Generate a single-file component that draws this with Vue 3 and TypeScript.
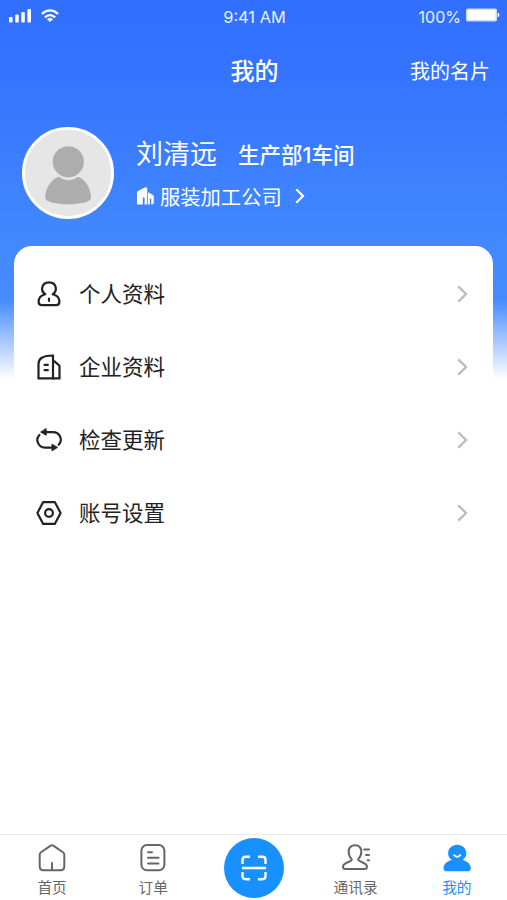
<script setup lang="ts">
interface MenuItem {
  key: 'person' | 'company' | 'refresh' | 'settings'
  label: string
}

interface TabItem {
  key: 'home' | 'order' | 'scan' | 'contacts' | 'mine'
  label: string
}

const menu: MenuItem[] = [
  { key: 'person', label: '个人资料' },
  { key: 'company', label: '企业资料' },
  { key: 'refresh', label: '检查更新' },
  { key: 'settings', label: '账号设置' },
]

const tabs: TabItem[] = [
  { key: 'home', label: '首页' },
  { key: 'order', label: '订单' },
  { key: 'scan', label: '' },
  { key: 'contacts', label: '通讯录' },
  { key: 'mine', label: '我的' },
]
</script>

<template>
  <div class="page">
    <div class="status">
      <div class="status-left">
        <svg class="signal" width="23" height="14" viewBox="0 0 23 14" fill="#fff">
          <rect x="0" y="8" width="3.6" height="5.6" rx="1" />
          <rect x="6.2" y="5.6" width="3.6" height="8" rx="1" />
          <rect x="12.2" y="3" width="3.6" height="10.6" rx="1" />
          <rect x="18.4" y="0" width="3.6" height="13.6" rx="1" />
        </svg>
        <svg class="wifi" width="18" height="14" viewBox="0 0 18 14" fill="none" stroke="#fff" stroke-width="2.3">
          <path d="M1 5C5.6 .2 12.4 .2 17 5" />
          <path d="M3.9 8.4C6.8 5.4 11.2 5.4 14.1 8.4" />
          <path d="M9 12.9L5.9 10.2C7.8 8.6 10.2 8.6 12.1 10.2Z" fill="#fff" stroke="none" />
        </svg>
      </div>
      <div class="clock">9:41 AM</div>
      <div class="status-right">
        <span>100%</span>
        <svg width="34" height="14" viewBox="0 0 34 14" fill="#fff">
          <rect x="0" y=".4" width="31" height="13" rx="1.6" fill-opacity=".75" />
          <rect x="1.5" y="1.8" width="28" height="10.2" rx=".8" />
          <path d="M31.6 4.5C34 5.2 34 8.6 31.6 9.3Z" />
        </svg>
      </div>
    </div>

    <header class="nav">
      <h1 class="title">我的</h1>
      <span class="nav-link">我的名片</span>
    </header>

    <section class="profile">
      <svg class="avatar" width="92" height="92" viewBox="0 0 92 92">
        <circle cx="46" cy="46" r="44.6" fill="#e6e6e6" stroke="#fff" stroke-width="2.8" />
        <circle cx="46.3" cy="34.8" r="15.6" fill="#adadad" />
        <path d="M36.8 49.8C43 54.4 50 54.4 56 49.8C63 52 69 61 69 71C69 79.3 23.2 79.3 23.2 71C23.2 61 29.5 52 36.8 49.8Z" fill="#adadad" />
      </svg>
      <div class="info">
        <div class="name-line">
          <span class="name">刘清远</span>
          <span class="dept">生产部1车间</span>
        </div>
        <div class="company">
          <svg class="building" width="17" height="18" viewBox="0 0 17 18" fill="#fff">
            <path d="M0 17.5V5.8Q0 4.6 1 4L7.8.5Q10.2-.2 10.2 2V17.5H7.6V10.5H5.8V17.5Z" />
            <path d="M11 5.2L15.2 7.4Q16.8 8.3 16.8 9.8V15.8Q16.8 17.5 15 17.5H14.2V11.5H12.8V17.5H11Z" />
          </svg>
          <span>服装加工公司</span>
          <svg class="company-arrow" width="10" height="16" viewBox="0 0 10 16" fill="none" stroke="#fff" stroke-width="2.2">
            <path d="M1.3 1.2L8 8L1.3 14.8" />
          </svg>
        </div>
      </div>
    </section>

    <main class="card">
      <div v-for="item in menu" :key="item.key" class="row">
        <svg class="row-icon" width="26" height="26" viewBox="0 0 26 26" fill="none" stroke="#222" stroke-width="2.2" stroke-linecap="round" stroke-linejoin="round">
          <template v-if="item.key === 'person'">
            <path d="M9.3 13.2C6.5 11.4 5.9 8.6 6.2 6.9C6.8 3.4 9.5 1.4 13 1.4S19.3 3.4 19.8 6.9C20.1 9.2 19.3 11.5 16.7 13.2C20.8 14.2 23.4 17 23.4 20.8C23.4 23.3 22.3 24.2 20 24.2H6C3.6 24.2 2.6 23.3 2.6 20.8C2.6 17 5.2 14.2 9.3 13.2Z" />
            <path d="M13 17.6V20" />
          </template>
          <template v-else-if="item.key === 'company'">
            <path d="M2.5 24.3V10C2.5 4.8 6.5 1.5 17 1.5V24.3Z" stroke-linejoin="miter" />
            <path d="M17 7.3H18.5L23.5 11.7V24.3H17" stroke-linejoin="miter" />
            <path d="M8.6 10.9H11.8M8.6 16.2H11.8" />
          </template>
          <template v-else-if="item.key === 'refresh'">
            <path d="M3.4 8C1.4 10 .9 13.2 1.9 15.6C3.1 18.6 5.6 20.6 9 20.6H17" />
            <path d="M9 5.2H16.5C20.3 5.2 23.3 7.2 24.4 10.4C25.3 13 24.7 15.7 22.7 17.8" />
            <path d="M10.2 2V8.2L5 5.2ZM16 17.6V23.8L21.2 20.6Z" fill="#222" stroke-width="1" />
          </template>
          <template v-else>
            <path d="M7.2 2.1H18.8L24.6 13L18.8 23.9H7.2L1.4 13Z" />
            <circle cx="13" cy="13" r="3.9" />
          </template>
        </svg>
        <span class="row-label">{{ item.label }}</span>
        <svg class="row-arrow" width="11" height="18" viewBox="0 0 11 18" fill="none" stroke="#bdbdbd" stroke-width="2.4">
          <path d="M1.3 1.4L9 9L1.3 16.6" />
        </svg>
      </div>
    </main>

    <nav class="tabbar">
      <div v-for="tab in tabs" :key="tab.key" class="tab" :class="{ active: tab.key === 'mine' }">
        <div v-if="tab.key === 'scan'" class="scan">
          <svg width="26" height="26" viewBox="0 0 26 26" fill="none" stroke="#fff" stroke-width="2.4">
            <path d="M1.5 9V5Q1.5 1.8 4.7 1.8H9M17 1.8H21.3Q24.5 1.8 24.5 5V9M24.5 17V21Q24.5 24.2 21.3 24.2H17M9 24.2H4.7Q1.5 24.2 1.5 21V17M1 13H25" />
          </svg>
        </div>
        <template v-else>
          <svg class="tab-icon" width="30" height="30" viewBox="0 0 30 30" fill="none" stroke="#666" stroke-width="2" stroke-linecap="round" stroke-linejoin="round">
            <template v-if="tab.key === 'home'">
              <path d="M13.7 2.6Q15 1.8 16.3 2.6L26 9.3Q27.3 10.2 27.3 11.8V23.5Q27.3 27.2 23.6 27.2H6.4Q2.7 27.2 2.7 23.5V11.8Q2.7 10.2 4 9.3Z" />
              <path d="M15 20V27" />
            </template>
            <template v-else-if="tab.key === 'order'">
              <rect x="3.4" y="2.1" width="23" height="25.2" rx="5.6" />
              <path d="M10 9.2H14M10 14.8H20.5M10 20.4H20.5" />
            </template>
            <template v-else-if="tab.key === 'contacts'">
              <path d="M10.8 16.4C8.2 13.8 7.7 11 7.7 8.8C7.7 4.7 10 2.2 14 2.2S20.3 4.7 20.3 8.8C20.3 11 19.7 13.8 17.1 16.4C16.8 19 25.8 19.2 26 23.5Q26 26 23.8 26H4.2Q2 26 2 23.5C2.4 19.2 11.1 19 10.8 16.4Z" />
              <path d="M23.2 6.6H28M25 12H28M26.6 17.2H28" />
            </template>
            <template v-else>
              <path d="M9.8 17C7.3 15.1 6.1 13 6.1 10.6C6.1 5.5 10 1.8 15.2 1.8S24.3 5.5 24.3 10.6C24.3 13 23.1 15.1 20.6 17C25.4 18.2 28.8 21.4 28.8 25.2Q28.8 28.3 25.7 28.3H4.6Q1.5 28.3 1.5 25.2C1.5 21.4 5 18.2 9.8 17Z" fill="#1890ff" stroke="none" />
              <path d="M12.1 12.2Q15.2 15.6 18.3 12.2" stroke="#fff" stroke-width="1.8" />
            </template>
          </svg>
          <span class="tab-label">{{ tab.label }}</span>
        </template>
      </div>
    </nav>
  </div>
</template>

<style>
body {
  margin: 0;
  background: #fff;
}
</style>

<style scoped>
.page {
  width: 507px;
  height: 900px;
  display: flex;
  flex-direction: column;
  overflow: hidden;
  color: #fff;
  font-family: "Noto Sans CJK SC", sans-serif;
  background: linear-gradient(180deg, #306eff 0, #3776ff 100px, #4086ff 220px, #468cff 300px, #fff 379px);
}

.status {
  height: 32px;
  display: grid;
  grid-template-columns: 1fr auto 1fr;
  align-items: center;
  padding: 0 7px 0 9px;
  box-sizing: border-box;
  font: 400 16px/32px Inter, sans-serif;
  color: #e8efff;
}

.status-left,
.status-right {
  display: flex;
  align-items: center;
}

.status-left {
  gap: 9px;
  padding-bottom: 2px;
}

.status-right {
  justify-content: flex-end;
  gap: 5px;
}

.status-right svg {
  margin-bottom: 3px;
}

.clock,
.status-right span {
  padding-top: 1px;
}

.clock {
  font-size: 16.4px;
}

.nav {
  height: 76px;
  display: grid;
  grid-template-columns: 1fr auto 1fr;
  align-items: center;
  padding: 0 17px 0 19px;
}

.title {
  grid-column: 2;
  margin: 0;
  font-size: 24px;
  font-weight: 500;
  line-height: 36px;
}

.nav-link {
  justify-self: end;
  margin-top: 2px;
  font-size: 20px;
  line-height: 30px;
}

.profile {
  height: 138px;
  display: flex;
  padding: 19px 22px 0;
  box-sizing: border-box;
}

.avatar {
  flex: none;
}

.info {
  padding: 6px 0 0 23px;
}

.name-line {
  display: flex;
  align-items: center;
  height: 40px;
}

.name {
  margin: -1px 0 0 -1px;
  font-size: 27px;
}

.dept {
  margin: 1px 0 0 21px;
  font-family: Inter, "Noto Sans CJK SC", sans-serif;
  font-size: 21.5px;
  font-weight: 500;
}

.company {
  height: 46px;
  display: flex;
  align-items: center;
  font-size: 20.3px;
}

.building {
  margin-right: 6px;
}

.company-arrow {
  margin-left: 13px;
}

.card {
  flex: 1;
  margin: 0 14px;
  padding: 12px 25px 0 22px;
  border-radius: 18px 18px 0 0;
  background: #fff;
  color: #222;
}

.row {
  height: 72.8px;
  display: flex;
  align-items: center;
}

.row-label {
  flex: 1;
  margin: -2px 0 0 17px;
  font-size: 21.5px;
  line-height: 32px;
}

.tabbar {
  height: 65px;
  display: grid;
  grid-template-columns: repeat(5, 101.2px);
  padding-left: 1.5px;
  background: #fff;
  border-top: 1px solid #e9e9e9;
}

.tab {
  display: flex;
  flex-direction: column;
  align-items: center;
  padding-top: 8px;
  color: #666;
}

.tab-label {
  font-size: 14.7px;
  line-height: 22px;
  margin-top: 3px;
}

.active {
  color: #1890ff;
}

.scan {
  width: 60px;
  height: 60px;
  margin-top: -5px;
  display: flex;
  align-items: center;
  justify-content: center;
  border-radius: 50%;
  background: #1890ff;
}
</style>
